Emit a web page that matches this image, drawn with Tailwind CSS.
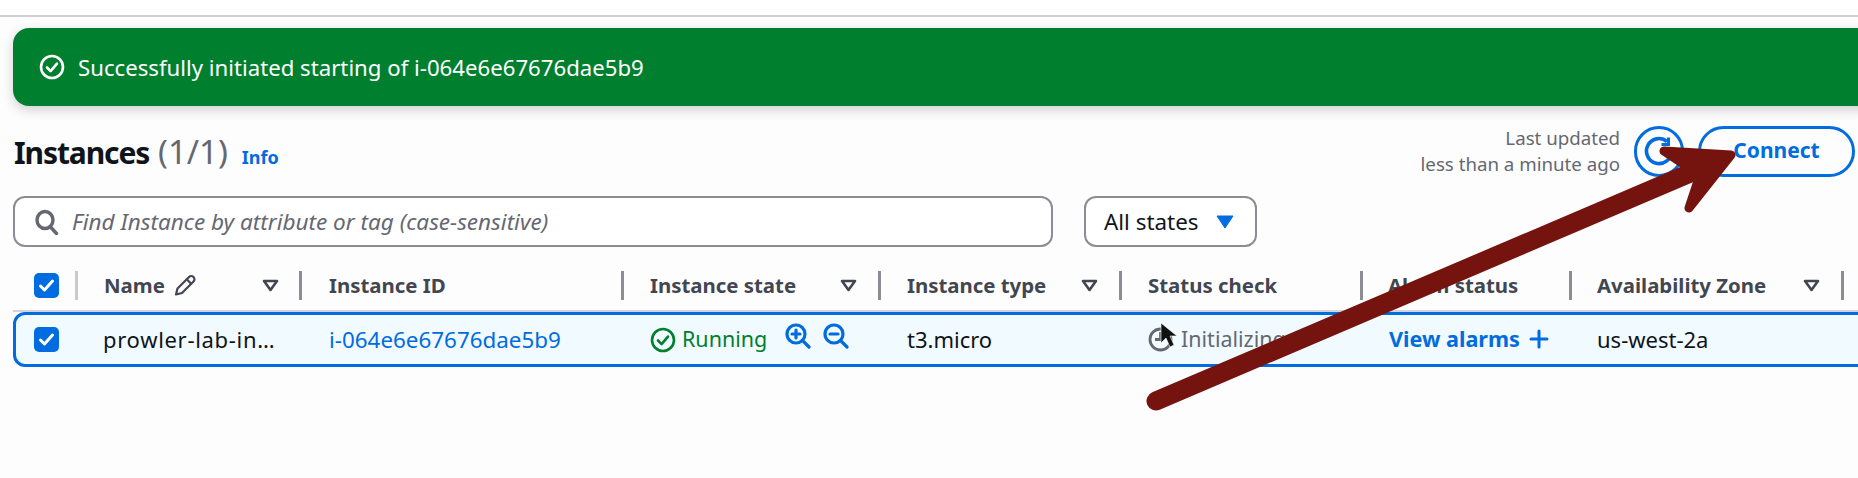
<!DOCTYPE html>
<html>
<head>
<meta charset="utf-8">
<script src="https://cdn.jsdelivr.net/npm/@tailwindcss/browser@4"></script>
</head>
<body class="m-0 bg-[#fdfdfd]">
<div class="relative w-[1858px] h-[478px] overflow-hidden font-['Noto_Sans',sans-serif] text-[22px] text-[#0f141a] bg-[#fdfdfd]">
  <div class="h-[15px] bg-white border-b-2 border-[#d0d0d0] box-content"></div>
  <div class="pl-[13px] pt-[11px]">
    <div class="h-[78px] mr-[-20px] rounded-[16px] bg-[#00802f] text-white flex items-center gap-[13px] pl-[26px] shadow-[0_4px_12px_rgba(0,0,0,0.18)]">
      <svg width="26" height="26" viewBox="0 0 26 26" fill="none" stroke="white" stroke-width="2.6" stroke-linecap="round" stroke-linejoin="round"><circle cx="13" cy="13" r="11"/><path d="M8 13.5l3.6 3.6L18 9.6"/></svg>
      <span class="text-[22.2px] mt-[2px]">Successfully initiated starting of i-064e6e67676dae5b9</span>
    </div>
    <div class="flex items-center h-[90px] pr-[3px]">
      <div class="flex items-baseline gap-[14px] flex-1 pl-px pt-[3px]">
        <h1 class="text-[30px] font-bold leading-none tracking-[-1.1px]">Instances <span class="ml-[2px] font-normal text-[33px] tracking-normal text-[#656871]">(1/1)</span></h1>
        <a class="text-[18px] font-bold text-[#006ce0]">Info</a>
      </div>
      <div class="text-right text-[18.7px] leading-[26px] text-[#656871] mr-[14px]">
        <div>Last updated</div>
        <div>less than a minute ago</div>
      </div>
      <button class="w-[50px] h-[51px] rounded-full border-[3px] border-[#006ce0] flex items-center justify-center mr-[14px]">
        <svg width="32" height="32" viewBox="0 0 32 32" fill="none" stroke="#006ce0" stroke-width="3.6"><path d="M24 6.5A12.5 12.5 0 1 0 28.5 16"/><path d="M25.5 2.5v7h-7" stroke-width="3"/></svg>
      </button>
      <button class="w-[157px] h-[51px] rounded-full border-[3px] border-[#006ce0] text-[#006ce0] font-bold text-[21px]">Connect</button>
    </div>
    <div class="flex gap-[31px] h-[51px]">
      <div class="w-[1040px] rounded-[12px] border-2 border-[#8c8c94] bg-white flex items-center gap-[13px] pl-[20px]">
        <svg width="24" height="26" viewBox="0 0 24 26" fill="none" stroke="#656871" stroke-width="3.4"><ellipse cx="10" cy="11" rx="8" ry="8.5"/><path d="M15.5 18l6 6.5" stroke-linecap="round"/></svg>
        <span class="italic text-[22.5px] text-[#656871]">Find Instance by attribute or tag (case-sensitive)</span>
      </div>
      <div class="w-[173px] rounded-[12px] border-2 border-[#8c8c94] bg-white flex items-center pl-[18px] gap-[17px]">
        <span class="text-[22.4px]">All states</span>
        <svg width="18" height="14" viewBox="0 0 18 14"><path d="M1 1h16l-8 12z" fill="#006ce0" stroke="#006ce0" stroke-linejoin="round"/></svg>
      </div>
    </div>
    <div class="grid grid-cols-[65px_224px_322px_257px_241px_241px_209px_272px_40px] h-[65px] items-end pb-[10px] font-bold text-[20.4px] text-[#424650] border-b-2 border-[#d5d5d9] mr-[-20px]">
      <div class="flex items-center justify-between pl-[21px] h-[29px]">
        <span class="w-[25px] h-[25px] rounded-[5px] bg-[#006ce0] flex items-center justify-center"><svg width="17" height="17" viewBox="0 0 17 17" fill="none" stroke="white" stroke-width="3" stroke-linecap="round" stroke-linejoin="round"><path d="M2.5 9l4 4 8-9"/></svg></span>
        <span class="w-[3px] h-full bg-[#c9c9ce]"></span>
      </div>
      <div class="flex items-center h-[29px] pl-[26px]">
        <span>Name</span>
        <svg class="ml-[8px]" width="24" height="25" viewBox="0 0 24 24" fill="none" stroke="#424650" stroke-width="2.2" stroke-linejoin="round"><path d="M3 21l1.5-6L16 3.5a2.8 2.8 0 0 1 4.5 4.5L9 19.5z"/><path d="M14 6l4.5 4.5"/></svg>
        <svg class="ml-auto mr-[20px]" width="17" height="13" viewBox="0 0 17 13" fill="none" stroke="#424650" stroke-width="2.6" stroke-linejoin="round"><path d="M2 2h13l-6.5 9z"/></svg>
        <span class="w-[3px] h-full bg-[#8c8c94]"></span>
      </div>
      <div class="flex items-center h-[29px] pl-[27px]"><span>Instance ID</span><span class="ml-auto w-[3px] h-full bg-[#8c8c94]"></span></div>
      <div class="flex items-center h-[29px] pl-[26px]"><span>Instance state</span>
        <svg class="ml-auto mr-[21px]" width="17" height="13" viewBox="0 0 17 13" fill="none" stroke="#424650" stroke-width="2.6" stroke-linejoin="round"><path d="M2 2h13l-6.5 9z"/></svg>
        <span class="w-[3px] h-full bg-[#8c8c94]"></span></div>
      <div class="flex items-center h-[29px] pl-[26px]"><span>Instance type</span>
        <svg class="ml-auto mr-[21px]" width="17" height="13" viewBox="0 0 17 13" fill="none" stroke="#424650" stroke-width="2.6" stroke-linejoin="round"><path d="M2 2h13l-6.5 9z"/></svg>
        <span class="w-[3px] h-full bg-[#8c8c94]"></span></div>
      <div class="flex items-center h-[29px] pl-[26px]"><span>Status check</span><span class="ml-auto w-[3px] h-full bg-[#8c8c94]"></span></div>
      <div class="flex items-center h-[29px] pl-[25px]"><span>Alarm status</span><span class="ml-auto w-[3px] h-full bg-[#8c8c94]"></span></div>
      <div class="flex items-center h-[29px] pl-[25px]"><span>Availability Zone</span>
        <svg class="ml-auto mr-[21px]" width="17" height="13" viewBox="0 0 17 13" fill="none" stroke="#424650" stroke-width="2.6" stroke-linejoin="round"><path d="M2 2h13l-6.5 9z"/></svg>
        <span class="w-[3px] h-full bg-[#8c8c94]"></span></div>
      <div></div>
    </div>
    <div class="grid grid-cols-[60px_224px_322px_257px_241px_241px_209px_272px_40px] h-[55px] items-center border-[3px] border-[#006ce0] rounded-[12px] bg-[#f1faff] mr-[-20px]">
      <div class="pl-[18px] flex"><span class="w-[25px] h-[25px] rounded-[5px] bg-[#006ce0] flex items-center justify-center"><svg width="17" height="17" viewBox="0 0 17 17" fill="none" stroke="white" stroke-width="3" stroke-linecap="round" stroke-linejoin="round"><path d="M2.5 9l4 4 8-9"/></svg></span></div>
      <div class="pl-[27px] tracking-[0.7px]">prowler-lab-in…</div>
      <div class="pl-[29px] text-[22.4px] text-[#006ce0]">i-064e6e67676dae5b9</div>
      <div class="pl-[28px] flex items-center">
        <svg width="26" height="26" viewBox="0 0 26 26" fill="none" stroke="#00802f" stroke-width="2.6" stroke-linecap="round" stroke-linejoin="round"><circle cx="13" cy="13" r="11"/><path d="M8 13.5l3.6 3.6L18 9.6"/></svg>
        <span class="ml-[6px] text-[21.5px] text-[#00802f]">Running</span>
        <svg class="ml-[18px] -mt-[8px]" width="26" height="26" viewBox="0 0 26 26" fill="none" stroke="#006ce0" stroke-width="3.2" stroke-linecap="round"><circle cx="11" cy="11" r="9"/><path d="M17.5 17.5l6.5 6.5M11 7v8M7 11h8"/></svg>
        <svg class="ml-[12px] -mt-[8px]" width="26" height="26" viewBox="0 0 26 26" fill="none" stroke="#006ce0" stroke-width="3.2" stroke-linecap="round"><circle cx="11" cy="11" r="9"/><path d="M17.5 17.5l6.5 6.5M7 11h8"/></svg>
      </div>
      <div class="pl-[28px]">t3.micro</div>
      <div class="pl-[28px] flex items-center">
        <svg width="25" height="27" viewBox="0 0 25 27" fill="none" stroke="#656871" stroke-width="2.8"><circle cx="12.5" cy="13.5" r="10.5"/><path d="M12.5 6v7.5H7"/></svg>
        <span class="ml-[8px] text-[21.5px] text-[#656871]">Initializing</span>
      </div>
      <div class="pl-[28px] flex items-center gap-[9px] font-bold text-[21.6px] text-[#006ce0]"><span>View alarms</span><svg width="20" height="20" viewBox="0 0 20 20" stroke="#006ce0" stroke-width="3" stroke-linecap="round"><path d="M10 2v16M2 10h16"/></svg></div>
      <div class="pl-[27px]">us-west-2a</div>
      <div></div>
    </div>
  </div>
  <!-- annotation overlay -->
  <svg class="absolute left-0 top-0 pointer-events-none" width="1858" height="478" viewBox="0 0 1858 478">
    <path d="M1161 323v20l5-5 4 9 4-2-4-9h7z" fill="#111" stroke="#fff" stroke-width="0.6"/>
    <path d="M1156 401L1702 168" stroke="#75140f" stroke-width="19" stroke-linecap="round" fill="none"/>
    <path d="M1664 151L1731 155 1689 208 1700 175z" fill="#75140f" stroke="#75140f" stroke-width="9" stroke-linejoin="round"/>
  </svg>
</div>
</body>
</html>
